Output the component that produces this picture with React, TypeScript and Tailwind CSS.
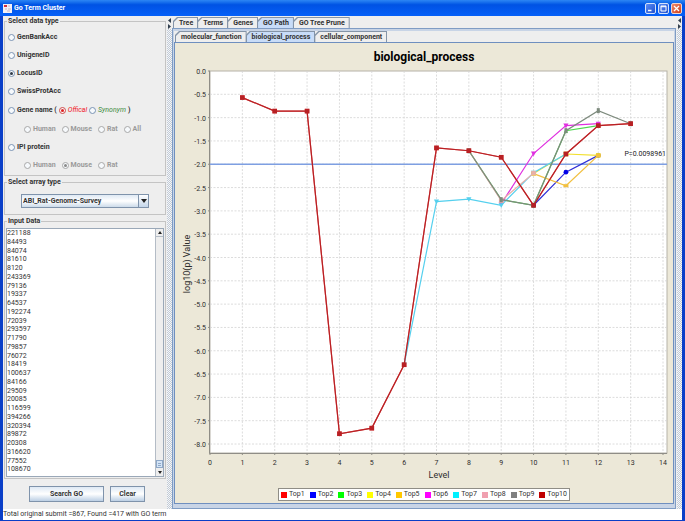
import { useState } from "react";

const MAIN_TABS = ["Tree", "Terms", "Genes", "GO Path", "GO Tree Prune"];
const ONTOLOGY_TABS = ["molecular_function", "biological_process", "cellular_component"];

const LOCUS_IDS = [
  "221188", "84493", "84074", "81610", "8120", "243369", "79136", "19337", "64537", "192274",
  "72039", "293597", "71790", "79857", "76072", "18419", "100637", "84166", "29509", "20085",
  "116599", "394266", "320394", "89872", "20308", "316620", "77552", "108670"
];

type Series = { name: string; color: string; points: [number, number][] };

const SHARED: [number, number][] = [
  [1, -0.57], [2, -0.86], [3, -0.86], [4, -7.78], [5, -7.66], [6, -6.3]
];

const SERIES: Series[] = [
  { name: "Top1", color: "#ff0000", points: [...SHARED, [7, -1.65], [8, -1.71], [9, -1.85], [10, -2.88], [11, -1.78], [12, -1.17], [13, -1.13]] },
  { name: "Top2", color: "#0000ff", points: [[10, -2.88], [11, -2.17], [12, -1.81]] },
  { name: "Top3", color: "#00ff00", points: [[8, -1.71], [9, -2.76], [10, -2.88], [11, -1.28], [12, -1.17]] },
  { name: "Top4", color: "#ffff00", points: [[10, -2.2], [11, -1.78], [12, -1.81]] },
  { name: "Top5", color: "#ffc800", points: [[10, -2.2], [11, -2.46], [12, -1.81]] },
  { name: "Top6", color: "#ff00ff", points: [[9, -2.85], [10, -1.77], [11, -1.17], [12, -1.13]] },
  { name: "Top7", color: "#00f0ff", points: [[6, -6.3], [7, -2.8], [8, -2.75], [9, -2.88], [10, -2.18], [11, -1.78]] },
  { name: "Top8", color: "#f0a0b0", points: [[8, -1.71], [9, -2.78], [10, -2.19]] },
  { name: "Top9", color: "#808080", points: [[8, -1.71], [9, -2.76], [10, -2.88], [11, -1.28], [12, -0.85], [13, -1.13]] },
  { name: "Top10", color: "#c00000", points: [...SHARED, [7, -1.65], [8, -1.71], [9, -1.85], [10, -2.88], [11, -1.78], [12, -1.17], [13, -1.13]] }
];

// drawn line colours, softer than the legend swatches
const LINE_COLORS: Record<string, string> = {
  Top1: "#e86060", Top2: "#3030d8", Top3: "#4fd84f", Top4: "#f2e030", Top5: "#f2c040",
  Top6: "#e030e0", Top7: "#55d0ee", Top8: "#e8b0a8", Top9: "#7d8a7d", Top10: "#b82024"
};

const PLOT = { left: 35, top: 6, right: 492, bottom: 388 };
const px = (level: number) => PLOT.left + (level * 453) / 14;
const py = (value: number) => PLOT.top - (value * 373) / 8;

function Marker({ name, x, y, color }: { name: string; x: number; y: number; color: string }) {
  if (name === "Top2") return <circle cx={x} cy={y} r={2.4} fill="#0000e8" />;
  if (name === "Top6" || name === "Top7") {
    return <path d={`M${x - 2.6} ${y - 2}h5.2l-2.6 4.6z`} fill={color} />;
  }
  if (name === "Top3") return <path d={`M${x - 2.2} ${y + 2}h4.4l-2.2 -4.2z`} fill={color} />;
  if (name === "Top5") return <rect x={x - 2.5} y={y - 1.5} width={5} height={3} fill={color} />;
  if (name === "Top9") return <rect x={x - 1.5} y={y - 2.5} width={3} height={5} fill={color} />;
  return <rect x={x - 2.3} y={y - 2.3} width={4.6} height={4.6} fill={color} />;
}

function PathChart() {
  const levels = Array.from({ length: 15 }, (_, i) => i);
  const values = Array.from({ length: 17 }, (_, i) => -i / 2);
  return (
    <svg viewBox="0 0 498 418" className="block w-full font-normal" role="img" aria-label="log10(p) value by level">
      <rect
        x={PLOT.left}
        y={PLOT.top}
        width={PLOT.right - PLOT.left}
        height={PLOT.bottom - PLOT.top}
        fill="#fff"
        stroke="#b5b2a8"
      />
      <g stroke="#d3d3d3" strokeWidth={0.8} strokeDasharray="2 1.5">
        {levels.slice(1).map((l) => (
          <line key={l} x1={px(l)} x2={px(l)} y1={PLOT.top} y2={PLOT.bottom} />
        ))}
        {values.slice(1).map((v) => (
          <line key={v} x1={PLOT.left} x2={PLOT.right} y1={py(v)} y2={py(v)} />
        ))}
      </g>
      <path
        d={`M${PLOT.left - 0.5} ${PLOT.top}V${PLOT.bottom + 0.5}H${PLOT.right}`}
        fill="none"
        stroke="#8f8d86"
      />
      <g stroke="#8f8d86">
        {levels.map((l) => (
          <line key={l} x1={px(l)} x2={px(l)} y1={PLOT.bottom} y2={PLOT.bottom + 2} />
        ))}
        {values.map((v) => (
          <line key={v} x1={PLOT.left - 2} x2={PLOT.left} y1={py(v)} y2={py(v)} />
        ))}
      </g>
      <g className="fill-[#2c2c2c] text-[7px]">
        {levels.map((l) => (
          <text key={l} x={px(l)} y={400} textAnchor="middle">
            {l}
          </text>
        ))}
        {values.map((v) => (
          <text key={v} x={31} y={py(v) + 3} textAnchor="end">
            {v === 0 ? "0.0" : v.toFixed(1)}
          </text>
        ))}
      </g>
      <line x1={PLOT.left} x2={PLOT.right} y1={py(-2)} y2={py(-2)} stroke="#7e9fe2" strokeWidth={1.3} />
      {SERIES.map((s) => (
        <g key={s.name}>
          <polyline
            points={s.points.map(([l, v]) => `${px(l)},${py(v)}`).join(" ")}
            fill="none"
            stroke={LINE_COLORS[s.name]}
            strokeWidth={1.2}
          />
          {s.points.map(([l, v]) => (
            <Marker key={l} name={s.name} x={px(l)} y={py(v)} color={LINE_COLORS[s.name]} />
          ))}
        </g>
      ))}
      <text x={491} y={91} textAnchor="end" className="fill-[#222] text-[7px]">
        P=0.0098961
      </text>
      <text x={264} y={413} textAnchor="middle" className="fill-[#2c2c2c] text-[9px]">
        Level
      </text>
      <text transform="translate(15 199) rotate(-90)" textAnchor="middle" className="fill-[#2c2c2c] text-[9px]">
        log10(p) Value
      </text>
    </svg>
  );
}

type RadioProps = {
  name: string;
  label: string;
  checked?: boolean;
  disabled?: boolean;
  tone?: "red" | "green";
  onPick?: () => void;
};

function Radio({ name, label, checked = false, disabled = false, tone, onPick }: RadioProps) {
  const dot = tone === "red" ? "bg-[#e02020]" : disabled ? "bg-[#8a8a8a]" : "bg-[#2f3a48]";
  const ring = tone === "red" ? "border-[#d04848]" : disabled ? "border-[#a8a8a8]" : "border-[#7a94b4]";
  const text =
    tone === "red"
      ? "font-normal italic text-[#f01828]"
      : tone === "green"
        ? "font-normal italic text-[#3c8a3c]"
        : disabled
          ? "text-[#9a9a9a]"
          : "text-[#333]";
  return (
    <label className="flex h-[9px] items-center gap-[2px]">
      <span className="relative flex">
        <input
          type="radio"
          name={name}
          checked={checked}
          disabled={disabled}
          onChange={onPick}
          className={`size-[7px] appearance-none rounded-full border bg-[#f6f9fc] ${ring}`}
        />
        {checked ? <span className={`absolute inset-[2px] rounded-full ${dot}`} /> : null}
      </span>
      <span className={text}>{label}</span>
    </label>
  );
}

function Tabs({ items, active, onPick, label }: { items: string[]; active: string; onPick: (t: string) => void; label: string }) {
  return (
    <div role="tablist" aria-label={label} className="flex bg-[#eee] pl-px">
      {items.map((t) => (
        <button
          key={t}
          type="button"
          role="tab"
          aria-selected={t === active}
          onClick={() => onPick(t)}
          className="-mr-px bg-[#8494a8] px-px pt-px [clip-path:polygon(4px_0,100%_0,100%_100%,0_100%,0_4px)]"
        >
          <span
            className={`block pr-1 pl-[5px] leading-[10px] [clip-path:polygon(4px_0,100%_0,100%_100%,0_100%,0_4px)] ${
              t === active ? "bg-[#c8dcf8]" : "bg-[#eee]"
            }`}
          >
            {t}
          </span>
        </button>
      ))}
    </div>
  );
}

function Splitter() {
  return (
    <div className="flex w-[6px] shrink-0 flex-col bg-[#eee] pt-px pl-px">
      <svg viewBox="0 0 5 12" className="block w-[5px] fill-[#33404f]" aria-hidden="true">
        <path d="M4 1v5L1 3.500zM1 7v5l3-2.500z" />
      </svg>
      <div className="flex-1 bg-[conic-gradient(#c2cad6_25%,#f4f6f8_0_50%,#c2cad6_0_75%,#f4f6f8_0)] bg-size-[2px_2px]" />
    </div>
  );
}

const groupBox = "min-w-0 border border-[#c4c4c4]";
const metalButton =
  "border border-[#7f93ab] bg-linear-to-b from-[#dfe9f4] via-white to-[#bccfe4] leading-[14px] text-[#333]";

export default function App() {
  const [idType, setIdType] = useState("LocusID");
  const [naming, setNaming] = useState("Offical");
  const [mainTab, setMainTab] = useState("GO Path");
  const [ontology, setOntology] = useState("biological_process");
  const [ids, setIds] = useState(LOCUS_IDS.join("\n"));

  return (
    <main className="flex min-h-screen flex-col bg-[#0a3fc8] px-[3px] pb-[2px] font-['Roboto','Liberation_Sans',sans-serif] text-[7px] font-bold text-[#333]">
      <header className="-mx-[3px] flex h-4 items-center gap-[2px] bg-linear-to-b from-[#2c86f4] via-[#0052e4] via-30% to-[#0560f8] px-[3px]">
        <svg viewBox="0 0 9 9" className="size-[9px]" aria-hidden="true">
          <rect width="9" height="9" fill="#f4f0f4" />
          <path d="M1 1h3v2H1z" fill="#d03040" />
          <path d="M5 2h2M2 5h2M5 5h3M4 7h3" stroke="#b8a0b0" strokeWidth=".7" />
        </svg>
        <h1 className="flex-1 text-[7px] leading-4 text-white">Go Term Cluster</h1>
        <div className="flex gap-[2px] pt-px">
          <button type="button" aria-label="Minimize" className="size-[11px] rounded-[2px] border border-[#d4e2fa] bg-linear-to-br from-[#5c8cf4] to-[#2050d0]">
            <svg viewBox="0 0 9 9" className="block" aria-hidden="true">
              <path d="M2 6.500h3.500" stroke="#fff" strokeWidth="1.500" />
            </svg>
          </button>
          <button type="button" aria-label="Maximize" className="size-[11px] rounded-[2px] border border-[#d4e2fa] bg-linear-to-br from-[#5c8cf4] to-[#2050d0]">
            <svg viewBox="0 0 9 9" className="block" aria-hidden="true">
              <path d="M2 2h5v5H2zM2 2.700h5" fill="none" stroke="#fff" />
            </svg>
          </button>
          <button type="button" aria-label="Close" className="size-[11px] rounded-[2px] border border-[#f0d4cc] bg-linear-to-br from-[#f08868] to-[#cc3c14]">
            <svg viewBox="0 0 9 9" className="block" aria-hidden="true">
              <path d="M2 2l5 5M7 2l-5 5" stroke="#fff" strokeWidth="1.300" />
            </svg>
          </button>
        </div>
      </header>

      <div className="flex flex-1 bg-[#eee]">
        <form className="flex w-[163px] shrink-0 flex-col gap-[2px] pt-px pl-px" onSubmit={(e) => e.preventDefault()}>
          <fieldset className={`${groupBox} px-[3px] pt-2 pb-[5px]`}>
            <legend className="-ml-px px-px leading-[8px]">Select data type</legend>
            <div className="flex h-[137px] flex-col justify-between">
              {["GenBankAcc", "UnigeneID", "LocusID", "SwissProtAcc"].map((t) => (
                <Radio key={t} name="idType" label={t} checked={idType === t} onPick={() => setIdType(t)} />
              ))}
              <div className="flex items-center gap-[2px]">
                <Radio name="idType" label="Gene name (" checked={idType === "Gene name"} onPick={() => setIdType("Gene name")} />
                <Radio name="naming" label="Offical" tone="red" checked={naming === "Offical"} onPick={() => setNaming("Offical")} />
                <Radio name="naming" label="Synonym" tone="green" checked={naming === "Synonym"} onPick={() => setNaming("Synonym")} />
                <span>)</span>
              </div>
              <div className="flex gap-[6px] pl-4">
                {["Human", "Mouse", "Rat", "All"].map((t) => (
                  <Radio key={t} name="geneSpecies" label={t} disabled />
                ))}
              </div>
              <Radio name="idType" label="IPI protein" checked={idType === "IPI protein"} onPick={() => setIdType("IPI protein")} />
              <div className="flex gap-[6px] pl-4">
                {["Human", "Mouse", "Rat"].map((t) => (
                  <Radio key={t} name="ipiSpecies" label={t} checked={t === "Mouse"} disabled />
                ))}
              </div>
            </div>
          </fieldset>

          <fieldset className={`${groupBox} px-4 pt-2 pb-[6px]`}>
            <legend className="-ml-[14px] px-px leading-[8px]">Select array type</legend>
            <div className="relative">
              <select
                aria-label="Select array type"
                className="block h-[14px] w-[128px] appearance-none border border-[#7f93ab] bg-linear-to-b from-[#dfe9f4] via-white to-[#ccdbea] px-px leading-[12px]"
              >
                <option>ABI_Rat-Genome-Survey</option>
              </select>
              <span className="pointer-events-none absolute top-0 left-[117px] flex h-[14px] w-[11px] items-center justify-center border border-[#7f93ab] bg-linear-to-b from-white to-[#c4d6ea]">
                <svg viewBox="0 0 6 4" className="w-[6px] fill-[#222]" aria-hidden="true">
                  <path d="M0 0h6L3 4z" />
                </svg>
              </span>
            </div>
          </fieldset>

          <fieldset className={`${groupBox} px-px pt-[3px] pb-px`}>
            <legend className="ml-px px-px leading-[8px]">Input Data</legend>
            <div className="flex h-[249px] border border-[#9aa8b8] bg-white">
              <textarea
                aria-label="Input Data"
                value={ids}
                onChange={(e) => setIds(e.target.value)}
                className="flex-1 resize-none overflow-hidden leading-tight font-normal outline-none"
              />
              <div className="flex w-2 flex-col border-l border-[#b4bcc6] bg-[#eee]">
                <button type="button" aria-label="Scroll up" className="flex h-2 items-center justify-center border-b border-[#b4bcc6]">
                  <svg viewBox="0 0 4 3" className="w-1 fill-[#222]" aria-hidden="true">
                    <path d="M0 3h4L2 0z" />
                  </svg>
                </button>
                <div className="flex flex-1 items-end">
                  <div className="flex h-2 w-full flex-col justify-center gap-px border border-[#8ea8c8] bg-[#d4e4f6] px-px">
                    <span className="h-px bg-[#8ea8c8]" />
                    <span className="h-px bg-[#8ea8c8]" />
                  </div>
                </div>
                <button type="button" aria-label="Scroll down" className="flex h-2 items-center justify-center">
                  <svg viewBox="0 0 4 3" className="w-1 fill-[#222]" aria-hidden="true">
                    <path d="M0 0h4L2 3z" />
                  </svg>
                </button>
              </div>
            </div>
          </fieldset>

          <div className="flex items-center gap-[6px] pt-[5px] pb-[6px] pl-[25px]">
            <button type="submit" className={`${metalButton} w-[75px]`}>
              Search GO
            </button>
            <button type="button" onClick={() => setIds("")} className={`${metalButton} w-[35px]`}>
              Clear
            </button>
          </div>
        </form>

        <Splitter />

        <section className="flex min-w-0 flex-1 flex-col pt-px">
          <Tabs label="Views" items={MAIN_TABS} active={mainTab} onPick={setMainTab} />
          <div className="flex flex-1 flex-col border border-[#7f9cc4] bg-[#c8d4e6] px-px pt-[2px] pb-1">
            <Tabs label="Ontology" items={ONTOLOGY_TABS} active={ontology} onPick={setOntology} />
            <div className="flex-1 border border-[#6f8fbf] bg-[#ece8d8] pb-[2px]">
              <h2 className="pt-[6px] text-center text-[12px] leading-4 text-black">{ontology}</h2>
              <PathChart />
              <ul className="mx-auto mt-[5px] flex w-fit gap-[5px] border border-[#8f8d86] bg-white px-[2px] leading-[11px] font-normal">
                {SERIES.map((s) => (
                  <li key={s.name} className="flex items-center gap-[2px]">
                    <svg viewBox="0 0 6 6" className="size-[6px]" aria-hidden="true">
                      <rect width="6" height="6" fill={s.color} />
                    </svg>
                    {s.name}
                  </li>
                ))}
              </ul>
            </div>
          </div>
        </section>

        <Splitter />
      </div>

      <footer className="bg-white leading-[11px] font-normal">
        Total original submit =867, Found =417 with GO term
      </footer>
    </main>
  );
}
